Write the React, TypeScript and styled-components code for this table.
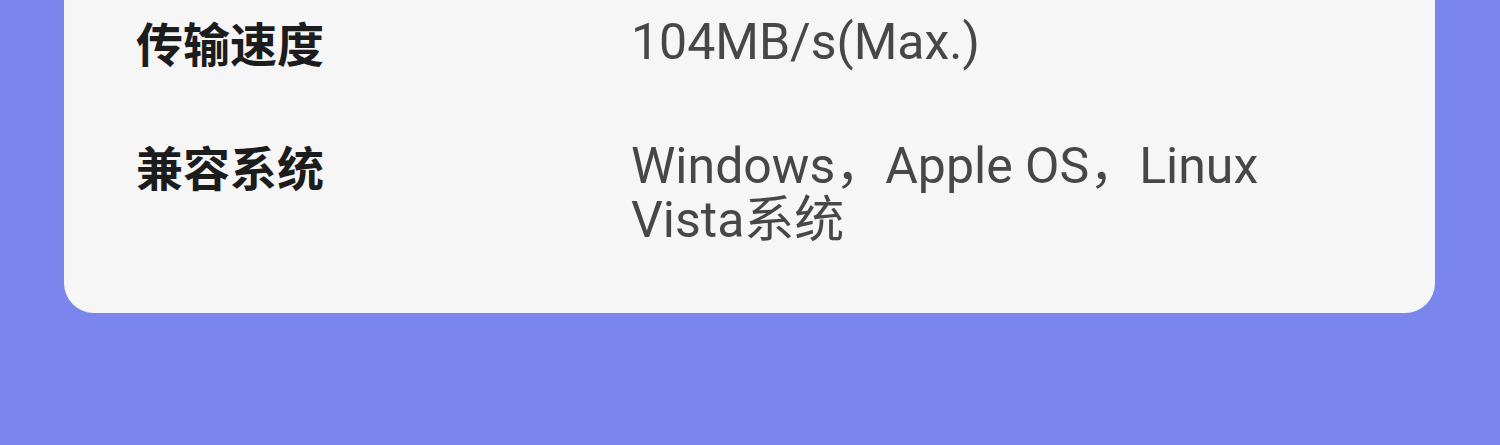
import { FC } from "react"
import styled, { createGlobalStyle } from "styled-components"

const Global = createGlobalStyle`
html, body{
  margin: 0;
  padding: 0;
  background: #7a86ee;
}
`

const Page = styled.main`
width: 1500px;
height: 445px;
box-sizing: border-box;
padding: 0 65px 0 64px;
background: #7a86ee;
overflow: hidden;
`

const Card = styled.section`
background: #f6f6f6;
border-radius: 0 0 30px 30px;
padding: 10px 72px 66px 72px;
display: flex;
flex-direction: column;
gap: 60px;
`

const Row = styled.div`
display: grid;
grid-template-columns: 495px 700px;
align-items: start;
`

const Label = styled.div`
font: 700 47px/64px "Noto Sans CJK SC", sans-serif;
color: #1c1c1c;
`

const Value = styled.div`
font: 400 50px/54px Roboto, "Noto Sans CJK SC", sans-serif;
color: #474747;
padding-top: 5px;
`

const specs = [
  { label: "传输速度", value: "104MB/s(Max.)" },
  { label: "兼容系统", value: "Windows，Apple OS，Linux Vista系统" },
]

const App: FC = () => {
  return (
    <>
      <Global />
      <Page>
        <Card>
          {specs.map((s) => (
            <Row key={s.label}>
              <Label>{s.label}</Label>
              <Value>{s.value}</Value>
            </Row>
          ))}
        </Card>
      </Page>
    </>
  )
}

export default App
